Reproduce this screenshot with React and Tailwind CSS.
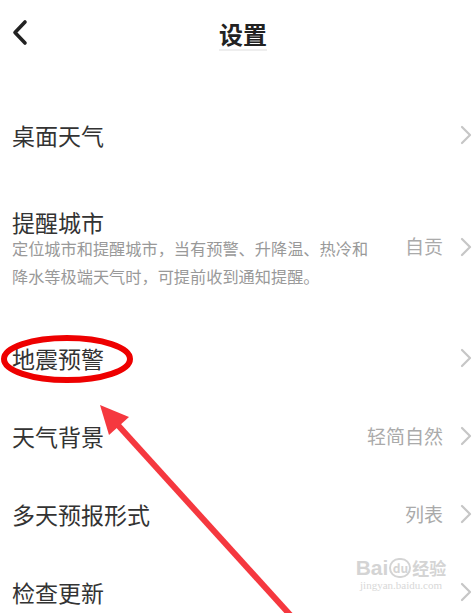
import React from 'react';

const font = { fontFamily: '"Noto Sans CJK SC", "Noto Sans", sans-serif' };

const Chevron = () => (
  <svg width="12" height="20" viewBox="0 0 12 20" className="shrink-0" aria-hidden="true">
    <polyline points="2,2 10,10 2,18" fill="none" stroke="#c6c6c6" strokeWidth="2.2" strokeLinecap="round" strokeLinejoin="round" />
  </svg>
);

const Row = ({ title, value }) => (
  <div className="h-[78px] flex items-center justify-between pl-[12px] pr-[1px]">
    <span className="text-[23px] leading-[28px] text-[#333]">{title}</span>
    <div className="flex items-center gap-[17px]">
      {value && <span className="text-[19px] text-[#aaa]">{value}</span>}
      <Chevron />
    </div>
  </div>
);

export default function App() {
  return (
    <div className="relative w-[473px] h-[613px] overflow-hidden bg-white" style={font}>
      <div className="h-[70px] relative flex items-center justify-center pl-[13px]">
        <svg width="20" height="28" viewBox="0 0 20 28" className="absolute left-[10px] top-[19px]" aria-hidden="true">
          <polyline points="15,3 5,13.5 15,24" fill="none" stroke="#222" strokeWidth="3.6" strokeLinecap="round" strokeLinejoin="round" />
        </svg>
        <span className="text-[24px] font-bold text-[#222] border-b-2 border-[#eee] leading-[30px]">设置</span>
      </div>
      <div className="h-[26px]" />
      <Row title="桌面天气" />
      <div className="h-[145px] flex items-center justify-between pl-[12px] pr-[1px]">
        <div className="flex flex-col pt-[7px]">
          <span className="text-[23px] leading-[24px] text-[#333]">提醒城市</span>
          <p className="w-[364px] text-[16.2px] leading-[28px] text-[#999]">
            定位城市和提醒城市，当有预警、升降温、热冷和降水等极端天气时，可提前收到通知提醒。
          </p>
        </div>
        <div className="flex items-center gap-[17px]">
          <span className="text-[19px] text-[#aaa]">自贡</span>
          <Chevron />
        </div>
      </div>
      <Row title="地震预警" />
      <Row title="天气背景" value="轻简自然" />
      <Row title="多天预报形式" value="列表" />
      <Row title="检查更新" />

      {/* watermark */}
      <div className="absolute left-[354px] top-[557px] w-[94px] flex flex-col items-center text-[#d4d4d4] pointer-events-none whitespace-nowrap">
        <div className="flex items-center gap-[1px] leading-none whitespace-nowrap">
          <span className="shrink-0 text-[21px] font-bold" style={{ fontFamily: '"Liberation Sans", sans-serif' }}>Bai</span>
          <span className="shrink-0 w-[22px] h-[20px] rounded-full border-2 border-[#d4d4d4] text-[12px] font-bold flex items-center justify-center">du</span>
          <span className="shrink-0 text-[17px] font-bold">经验</span>
        </div>
        <span className="text-[11px] leading-[15px] text-[#d8d8d8]" style={{ fontFamily: '"Liberation Serif", serif' }}>jingyan.baidu.com</span>
      </div>

      {/* red annotation */}
      <svg width="473" height="613" viewBox="0 0 473 613" className="absolute inset-0 pointer-events-none" aria-hidden="true">
        <ellipse cx="67" cy="359" rx="63" ry="21" fill="none" stroke="#ee0000" strokeWidth="6" />
        <line x1="293" y1="618" x2="116" y2="423" stroke="#f5383f" strokeWidth="6" />
        <polygon points="100,405 109,435 129,417" fill="#f5383f" />
      </svg>
    </div>
  );
}
